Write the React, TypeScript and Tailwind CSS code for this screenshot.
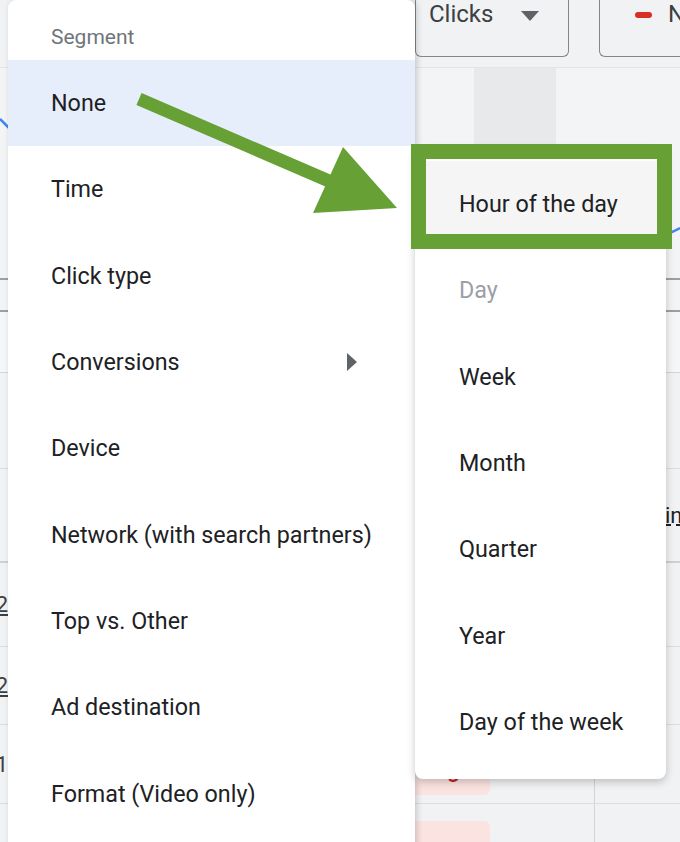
import React from "react";

const leftItems = [
  "None",
  "Time",
  "Click type",
  "Conversions",
  "Device",
  "Network (with search partners)",
  "Top vs. Other",
  "Ad destination",
  "Format (Video only)",
];

const subItems = ["Hour of the day", "Day", "Week", "Month", "Quarter", "Year", "Day of the week"];

export default function App() {
  return (
    <div
      className="relative w-[680px] h-[842px] overflow-hidden bg-[#f1f2f4] text-[#202124]"
      style={{ fontFamily: "Roboto, 'Liberation Sans', sans-serif" }}
    >
      {/* Background page: toolbar */}
      <div className="h-[68px] flex pl-[415px] gap-[30px] border-b border-[#e3e4e6]">
        <div className="shrink-0 w-[154px] h-[57px] border border-t-0 border-[#80868b] rounded-b-md flex items-start pl-[13px] pt-[2px]">
          <span className="text-[24px] leading-none text-[#3c4043]">Clicks</span>
          <svg width="18" height="10" viewBox="0 0 18 10" className="ml-[28px] mt-[9px]">
            <path d="M0 0 L18 0 L9 10 Z" fill="#5f6368" />
          </svg>
        </div>
        <div className="shrink-0 w-[120px] h-[57px] border border-t-0 border-r-0 border-[#80868b] rounded-bl-md flex items-start pl-[35px] pt-[2px]">
          <span className="mt-[10px] w-[17px] h-[6px] rounded-full bg-[#d93025]" />
          <span className="ml-[16px] text-[24px] leading-none text-[#3c4043]">N</span>
        </div>
      </div>

      {/* Background page: chart */}
      <div className="relative h-[244px] bg-[#f3f4f5] border-b-2 border-[#9e9fa1]">
        <div className="ml-[474px] w-[82px] h-[77px] bg-[#e8e9eb]" />
        <div className="absolute left-0 right-0 top-[210px] border-t-2 border-[#9e9fa1]" />
        <svg className="absolute left-0 top-0" width="680" height="244" viewBox="0 0 680 244">
          <path d="M0 51 L9 60 L300 130 L660 170 L680 160" stroke="#4285f4" strokeWidth="2.5" fill="none" />
        </svg>
      </div>

      {/* Background page: table */}
      <div className="flex flex-col">
        <div className="h-[61px] bg-[#f5f6f7] border-b border-[#d4d5d7]" />
        <div className="h-[96px] border-b border-[#dcdddf]" />
        <div className="h-[94px] border-b-2 border-[#cfd0d2] flex items-center pl-[665px]">
          <span className="text-[22px] text-[#202124] underline decoration-dashed">in</span>
        </div>
        <div className="h-[84px] border-b border-[#dcdddf] flex items-center">
          <span className="w-[8px] overflow-hidden flex justify-end text-[22px] text-[#3c4043] underline">2</span>
        </div>
        <div className="h-[78px] border-b border-[#dcdddf] flex items-center">
          <span className="w-[8px] overflow-hidden flex justify-end text-[22px] text-[#3c4043] underline">2</span>
        </div>
        <div className="h-[79px] border-b border-[#dcdddf] flex items-center relative">
          <span className="w-[8px] overflow-hidden flex justify-end text-[22px] text-[#3c4043]">1</span>
          <div className="absolute left-[405px] top-[12px] w-[85px] h-[58px] rounded-md bg-[#fbe3e1] flex items-end justify-end pr-[10px] pb-[14px]">
            <span className="text-[23px] leading-none font-medium text-[#c5221f]">Target</span>
          </div>
          <div className="absolute left-[594px] top-0 bottom-0 border-l border-[#d4d5d7]" />
        </div>
        <div className="h-[60px] relative">
          <div className="absolute left-[405px] top-[17px] w-[85px] h-[40px] rounded-md bg-[#fbe3e1]" />
          <div className="absolute left-[594px] top-0 bottom-0 border-l border-[#d4d5d7]" />
        </div>
      </div>

      {/* Left segment menu */}
      <div className="absolute left-[8px] top-0 w-[407px] h-[900px] bg-white rounded-t-lg shadow-[2px_0_6px_rgba(0,0,0,0.18)]">
        <div className="h-[60px] flex items-start pl-[43px] pt-[27px] text-[21px] leading-none text-[#70757a]">Segment</div>
        {leftItems.map((it, i) => (
          <div
            key={it}
            className={`h-[86.4px] flex items-center pl-[43px] pr-[58px] text-[23.3px] whitespace-nowrap ${i === 0 ? "bg-[#e6eefb] text-[#1f1f1f]" : "text-[#202124]"}`}
          >
            <span className="flex-1">{it}</span>
            {it === "Conversions" && (
              <svg width="10" height="18" viewBox="0 0 10 18">
                <path d="M0 0 L10 9 L0 18 Z" fill="#5f6368" />
              </svg>
            )}
          </div>
        ))}
      </div>

      {/* Time submenu */}
      <div className="absolute left-[415px] top-[148px] w-[251px] pt-[13px] pb-[13px] bg-white rounded-lg shadow-[0_3px_8px_rgba(0,0,0,0.22)]">
        {subItems.map((it, i) => (
          <div
            key={it}
            className={`h-[86.4px] flex items-center pl-[44px] text-[23.3px] whitespace-nowrap ${i === 0 ? "bg-[#f5f5f5] text-[#202124]" : i === 1 ? "text-[#9aa0a6]" : "text-[#202124]"}`}
          >
            {it}
          </div>
        ))}
      </div>

      {/* Green highlight box */}
      <div className="absolute left-[411px] top-[144px] w-[261px] h-[105px] border-[15px] border-[#67a034]" />

      {/* Green arrow */}
      <svg className="absolute left-0 top-0 pointer-events-none" width="680" height="842" viewBox="0 0 680 842">
        <line x1="139" y1="99" x2="336" y2="184" stroke="#67a034" strokeWidth="13" />
        <polygon points="343,147 397,208 313,213" fill="#67a034" />
      </svg>
    </div>
  );
}
